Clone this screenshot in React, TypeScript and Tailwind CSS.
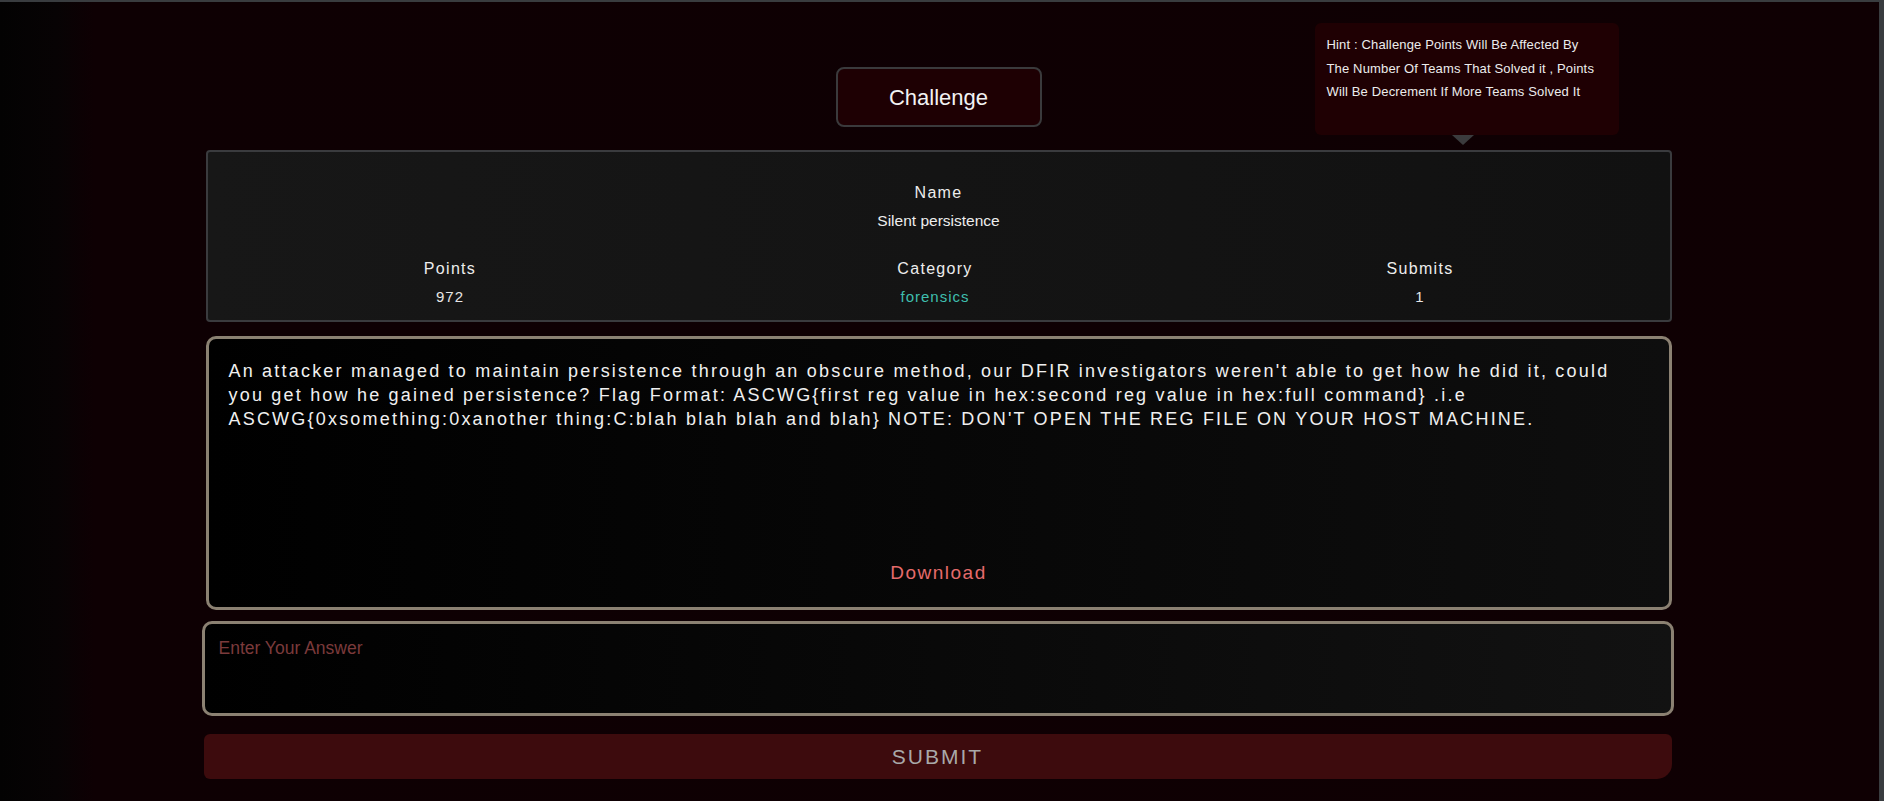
import { useState } from "react";

const stats = [
  { label: "Points", value: "972", tone: "text-[#e6e6e6]" },
  { label: "Category", value: "forensics", tone: "text-[#3fbfae]" },
  { label: "Submits", value: "1", tone: "text-[#e6e6e6]" },
];

export default function App() {
  const [answer, setAnswer] = useState("");

  return (
    <div className="h-[801px] overflow-hidden border-t-2 border-r-[5px] border-[#393c3f] bg-[linear-gradient(to_right,#030202_0%,#070304_3%,#0e0003_5%,#0f0003_100%)] font-['Liberation_Sans',Arial,sans-serif]">
      <div className="relative mx-auto w-[1468px] pr-[2px]">
        {/* hint tooltip */}
        <div className="absolute top-[21px] right-[55px] w-[304px] h-[112px] rounded-[6px] bg-[#1f0003] pl-[12px] pr-[21px] pt-[10px]">
          <p className="text-[13px] leading-[23.5px] tracking-[0.15px] text-[#ececec]">
            Hint : Challenge Points Will Be Affected By The Number Of Teams That Solved it , Points Will Be Decrement If More Teams Solved It
          </p>
          <div className="absolute left-[137px] top-full w-0 h-0 border-x-[11px] border-x-transparent border-t-[10px] border-t-[#3b3b3d]" />
        </div>

        {/* title */}
        <div className="pt-[65px] flex justify-center">
          <div className="w-[206px] h-[60px] rounded-[8px] border-2 border-[#3a3a3c] bg-[#1e0003] flex items-center justify-center text-[22px] text-[#f2f2f2]">
            Challenge
          </div>
        </div>

        {/* info card */}
        <div className="mt-[23px] rounded-[4px] border-2 border-[#3a3b3e] bg-[linear-gradient(to_right,#171717,#111111)] pt-[29px] pb-[11px] text-center">
          <div className="text-[16px] leading-[24px] tracking-[1.3px] text-[#ededed]">Name</div>
          <div className="mt-[4px] text-[15.5px] leading-[24px] text-[#ededed]">Silent persistence</div>
          <div className="mt-[24px] grid grid-cols-3 pr-[7px]">
            {stats.map((s) => (
              <div key={s.label}>
                <div className="text-[16px] leading-[24px] tracking-[1.3px] text-[#ededed]">{s.label}</div>
                <div className={`mt-[4px] text-[15px] leading-[24px] tracking-[1px] ${s.tone}`}>{s.value}</div>
              </div>
            ))}
          </div>
        </div>

        {/* description */}
        <div className="mt-[14px] h-[274px] rounded-[10px] border-[3px] border-[#8b8172] bg-[linear-gradient(to_right,#000000,#0e0e0e)] px-[20px] pt-[20px] pb-[22px] flex flex-col justify-between">
          <p className="text-[18px] leading-[24px] tracking-[2.2px] text-[#f0f0f0]">
            An attacker managed to maintain persistence through an obscure method, our DFIR investigators weren't able to get how he did it, could you get how he gained persistence? Flag Format: ASCWG{"{"}first reg value in hex:second reg value in hex:full command{"}"} .i.e ASCWG{"{"}0xsomething:0xanother thing:C:blah blah blah and blah{"}"} NOTE: DON'T OPEN THE REG FILE ON YOUR HOST MACHINE.
          </p>
          <a className="self-center text-[19px] leading-[24px] tracking-[1.5px] text-[#e56b6b] cursor-pointer">Download</a>
        </div>

        {/* answer */}
        <textarea
          value={answer}
          onChange={(e) => setAnswer(e.target.value)}
          placeholder="Enter Your Answer"
          className="mt-[11px] -ml-[4px] block w-[1472px] h-[95px] resize-none rounded-[10px] border-[3px] border-[#8b8172] bg-[linear-gradient(to_right,#000000,#121212)] px-[14px] pt-[12px] text-[17.5px] leading-[24px] text-[#e6e6e6] placeholder:text-[#7b3a3b] outline-none"
        />

        {/* submit */}
        <button className="mt-[18px] -ml-[2px] block w-[1468px] h-[45px] rounded-[6px] rounded-br-[15px] bg-[#3d0b0d] text-[21px] tracking-[2px] text-[#a9a9a9]">
          SUBMIT
        </button>
      </div>
    </div>
  );
}
